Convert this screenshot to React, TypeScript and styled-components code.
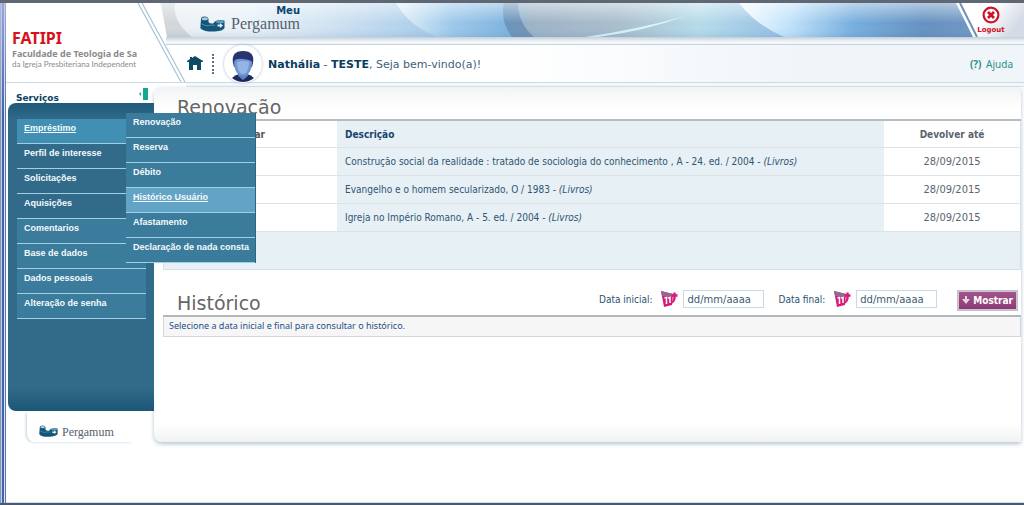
import React from "react";
import styled, { createGlobalStyle, css } from "styled-components";

const GlobalStyle = createGlobalStyle`
  *, *::before, *::after { box-sizing: border-box; }
  body { margin: 0; background: #fff; font-family: "DejaVu Sans Condensed", "DejaVu Sans", Tahoma, sans-serif; font-size: 10px; color: #2f5575; }
  a { color: inherit; text-decoration: none; }
  ul { list-style: none; margin: 0; padding: 0; }
  h1, h2, p { margin: 0; }
`;

const wide = `"DejaVu Sans", Verdana, sans-serif`;

const Frame = styled.div`
  display: flex;
  min-height: 100vh;
  border-top: 3px solid #5f6872;
  border-bottom: 2px solid #4a5a75;
`;
const Edge = styled.div`
  flex: none;
  width: 6px;
  background:
    linear-gradient(rgba(190, 196, 235, 0.7), rgba(190, 196, 235, 0) 110px),
    linear-gradient(90deg, #8a97b4 0 1px, #c3cdea 1px 2px, #3f66ac 2px 4px, #dfe6f5 4px 5px, #5e74a6 5px);
`;
const Page = styled.div`
  flex: 1;
  min-width: 0;
  border-bottom: 1px solid #d5dde4;
`;

const Header = styled.header`
  position: relative;
  display: flex;
  height: 80px;
  border-bottom: 1px solid #ccdae6;
`;
const Brand = styled.div`
  flex: none;
  width: 154px;
  padding: 26px 0 0 6px;
  white-space: nowrap;
`;
const BrandName = styled.h1`
  color: #d8101c;
  font-family: "Noto Sans", sans-serif;
  font-size: 16px;
  line-height: 19px;
`;
const BrandLine = styled.p<{ $strong?: boolean }>`
  font-family: ${(p) => (p.$strong ? `"Noto Sans"` : "Lato")}, sans-serif;
  font-size: ${(p) => (p.$strong ? "9px" : "8px")};
  font-weight: ${(p) => (p.$strong ? 700 : 400)};
  line-height: 11px;
  color: #8b8b8b;
`;
const Slashes = styled.svg`
  position: absolute;
  left: 130px;
  top: 0;
`;
const HeaderMain = styled.div`
  flex: 1;
  min-width: 0;
`;
const Banner = styled.div`
  position: relative;
  display: flex;
  justify-content: space-between;
  height: 34px;
`;
const Art = styled.svg`
  position: absolute;
  inset: 0;
  width: 100%;
  height: 100%;
`;
const BannerLogo = styled.div`
  position: relative;
  display: flex;
  align-items: flex-end;
  gap: 6px;
  padding: 0 0 5px 40px;
`;
const LogoWords = styled.div`
  display: flex;
  flex-direction: column;
  align-items: flex-end;
`;
const Meu = styled.span`
  font-family: ${wide};
  font-size: 10px;
  font-weight: 700;
  line-height: 10px;
  color: #0b4673;
`;
const Wordmark = styled.span<{ $small?: boolean }>`
  font-family: "Liberation Serif", serif;
  font-size: ${(p) => (p.$small ? "12px" : "16px")};
  line-height: 16px;
  color: #55606c;
`;
const Logout = styled.a`
  position: relative;
  display: flex;
  flex-direction: column;
  align-items: center;
  width: 68px;
  padding: 3px 0 0 2px;
  font-family: ${wide};
  font-size: 7px;
  font-weight: 700;
  line-height: 12px;
  color: #cf1126;
`;
const Raised = styled.span`
  position: relative;
  display: block;
  svg { display: block; }
`;
const BannerShade = styled.div`
  height: 8px;
  margin-left: 6px;
  border-bottom: 1px solid #c5d3de;
  background: linear-gradient(#c3cfdb, #f3f7fa 70%);
`;
const UserBar = styled.div`
  display: flex;
  align-items: center;
  height: 37px;
  padding: 1px 11px 0 27px;
  background: linear-gradient(90deg, #fff 40%, #f0f5f9 75%);
`;
const HomeLink = styled.a`
  display: block;
  padding-bottom: 2px;
  svg { display: block; }
`;
const Dots = styled.span`
  height: 20px;
  margin: 0 10px 0 9px;
  border-left: 2px dotted #5b6f93;
`;
const Avatar = styled.div`
  flex: none;
  position: relative;
  width: 38px;
  height: 38px;
  padding: 3px;
  border-radius: 50%;
  background: #fff;
  box-shadow: 0 0 3px #a9b9d2;
`;
const Welcome = styled.p`
  flex: 1;
  padding-left: 6px;
  font-family: ${wide};
  font-size: 11px;
  color: #44607a;
  b { color: #0c3c5e; }
`;
const Help = styled.a`
  font-family: "Noto Sans", sans-serif;
  font-size: 10px;
  color: #2b8f8b;
  b { margin-right: 2px; }
`;

const HeaderRule = styled.div`
  height: 4px;
  margin-left: 180px;
  border-bottom: 1px solid #d8e2ea;
  background: #f4f8fb;
`;
const Body = styled.div`
  display: flex;
  padding: 0 3px 0 2px;
`;
const Side = styled.aside`
  flex: none;
  width: 146px;
`;
const SideHead = styled.div`
  display: flex;
  justify-content: space-between;
  height: 16px;
  padding: 1px 6px 0 8px;
  color: #0b3f60;
`;
const SideTitle = styled.h2`
  padding-top: 4px;
  font-family: ${wide};
  font-size: 9px;
  line-height: 12px;
`;
const Menu = styled.nav`
  position: relative;
  z-index: 2;
  height: 308px;
  padding: 16px 8px 0 9px;
  border-radius: 8px 0 0 8px;
  background: linear-gradient(#1f5a7c, #326b8a 18px, #326b8a 284px, #1c5676);
  font-family: "Liberation Sans", Arial, sans-serif;
  font-size: 9px;
  font-weight: 700;
`;
const tones = {
  plain: "#326b8a",
  lower: "#3b7b9b",
  open: "#4190b4",
  hover: "#62a3c6",
};
const Item = styled.li<{ $tone: keyof typeof tones }>`
  ${(p) => p.$tone === "open" && css`position: relative;`}
`;
const ItemLink = styled.a<{ $tone: keyof typeof tones }>`
  display: block;
  height: 25px;
  padding: 3px 7px 0;
  border-bottom: 1px solid #9fd0e6;
  background: ${(p) => tones[p.$tone]};
  color: #f4fafd;
  line-height: 13px;
  white-space: nowrap;
  ${(p) => (p.$tone === "open" || p.$tone === "hover") && css`text-decoration: underline;`}
`;
const SubMenu = styled.ul`
  position: absolute;
  z-index: 3;
  left: 109px;
  top: -6px;
  width: 130px;
  border-right: 1px solid #2b6784;
`;
const SideFoot = styled.div`
  display: flex;
  align-items: center;
  gap: 4px;
  height: 31px;
  margin: 0 20px 0 19px;
  padding: 10px 0 0 12px;
  border-bottom-left-radius: 8px;
  box-shadow: -2px 1px 3px -1px #bfd3e0;
`;

const Panel = styled.main`
  flex: 1;
  min-width: 0;
  height: 355px;
  padding: 8px 0 0 9px;
  border-radius: 8px 0 0 8px;
  background: linear-gradient(#f2f3f4, #fff 22px, #fff 336px, #f1f2f3);
  box-shadow: 0 2px 4px #b3c4d2;
`;
const Title = styled.h2`
  padding-left: 14px;
  font-family: ${wide};
  font-size: 19px;
  font-weight: 400;
  line-height: 24px;
  color: #666;
`;
const Loans = styled.table`
  width: 100%;
  border-collapse: separate;
  border-spacing: 0;
  border-top: 2px solid #b9bcbe;
  table-layout: fixed;
  th, td {
    height: 28px;
    padding: 0 8px;
    border-bottom: 1px solid #dce3e7;
    text-align: left;
    vertical-align: middle;
  }
  th { height: 27px; color: #19456e; }
  th:first-child { padding: 0 72px 0 0; text-align: right; color: #555; }
  th:first-child, td:first-child { width: 174px; }
  th:nth-child(2), td:nth-child(2) { background: #e7f0f4; }
  th:last-child, td:last-child { width: 137px; text-align: center; color: #5a6570; border-right: 1px solid #dce3e7; }
  td:last-child { font-size: 11px; }
  tfoot td:first-child { height: 38px; background: #e7f0f4; border: 1px solid #d3e1e8; border-top: 0; }
`;
const HistoryHead = styled.form`
  display: flex;
  align-items: flex-end;
  height: 34px;
  margin-top: 11px;
  color: #2b5273;
`;
const Grow = styled.div`
  flex: 1;
`;
const Field = styled.label`
  display: flex;
  align-items: center;
  gap: 5px;
  height: 32px;
  margin-right: 14px;
  span { margin-right: 4px; }
`;
const DateInput = styled.input`
  width: 81px;
  height: 18px;
  padding: 0 3px;
  border: 1px solid #c6dbe8;
  background: #fff;
  font-family: ${wide};
  font-size: 10px;
  color: #3b5a72;
`;
const Show = styled.button`
  display: flex;
  align-items: center;
  gap: 3px;
  height: 21px;
  margin: 0 3px 4px 6px;
  padding: 0 3px;
  border: 2px solid #d9bfd1;
  outline: 1px solid #b9c4cc;
  outline-offset: -1px;
  background: linear-gradient(#a3568b, #8d3a74);
  font-family: inherit;
  font-size: 10px;
  font-weight: 700;
  color: #fff;
`;
const Notice = styled.p`
  height: 22px;
  padding: 0 5px;
  border: 1px solid #d3d6d9;
  border-top: 2px solid #b4b7ba;
  background: #f6f6f6;
  font-family: "Noto Sans", sans-serif;
  font-size: 9px;
  line-height: 18px;
  color: #254f8a;
`;

function PergamumMark({ width }: { width: number }) {
  return (
    <svg width={width} height={(width * 16) / 25} viewBox="0 0 25 16" aria-hidden="true">
      <path d="M1 3Q1 .5 4.500 .5T8.500 3V6Q10 8 13 7.500L15 5.500Q17 3.500 24.500 4.500V12Q23 15 15 15.500Q5 16 1 13Q0 12 .5 10Z" fill="#14557a" />
      <ellipse cx="4.800" cy="2.800" rx="3" ry="1.500" fill="#a9cbdc" />
      <path d="M2 8Q6 10.500 9 9.500T15 9.500" fill="none" stroke="#4f8fb0" strokeWidth="1" />
      <ellipse cx="20" cy="6" rx="4" ry="1.300" fill="#5f9dbc" />
      <path d="M17.500 8.500H20V7L23 9.500L20 12V10.500H17.500Z" fill="#e2f0f6" />
    </svg>
  );
}

function CalendarIcon() {
  return (
    <svg width="17" height="18" viewBox="0 0 17 18" aria-hidden="true">
      <path d="M0 1L12 4L11 15L3 17Z" fill="#d81b78" />
      <path d="M0 1L12 4V7L1 6Z" fill="#8f6a92" />
      <path d="M3.500 8L5.500 7.500V14M7 8L9 7.500V13" fill="none" stroke="#fff" strokeWidth="1.500" />
      <path d="M13.500 2.500V8.500M10.500 5.500H16.500" stroke="#d81b78" strokeWidth="2.400" />
      <path d="M10 14L12.500 8H14.500Q14.500 12 10 14Z" fill="#d81b78" />
    </svg>
  );
}

const services = [
  "Empréstimo", "Perfil de interesse", "Solicitações", "Aquisições",
  "Comentarios", "Base de dados", "Dados pessoais", "Alteração de senha",
];
const loanActions = ["Renovação", "Reserva", "Débito", "Histórico Usuário", "Afastamento", "Declaração de nada consta"];
const loans = [
  "Construção social da realidade : tratado de sociologia do conhecimento , A - 24. ed. / 2004",
  "Evangelho e o homem secularizado, O / 1983",
  "Igreja no Império Romano, A - 5. ed. / 2004",
];

function LoanSubMenu() {
  return (
    <SubMenu>
      {loanActions.map((action) => {
        const tone = action === "Histórico Usuário" ? "hover" : "lower";
        return (
          <Item key={action} $tone={tone}>
            <ItemLink href="#acao" $tone={tone}>{action}</ItemLink>
          </Item>
        );
      })}
    </SubMenu>
  );
}

export default function App() {
  return (
    <>
      <GlobalStyle />
      <Frame>
        <Edge />
        <Page>
          <Header>
            <Brand>
              <BrandName>FATIPI</BrandName>
              <BrandLine $strong>Faculdade de Teologia de Sa</BrandLine>
              <BrandLine>da Igreja Presbiteriana Independent</BrandLine>
            </Brand>
            <HeaderMain>
              <Banner>
                <Art viewBox="0 0 864 34" preserveAspectRatio="none" aria-hidden="true">
                  <defs>
                    <linearGradient id="base" x1="0" x2="1" y1="0" y2="0">
                      <stop offset="0" stopColor="#eef1f4" />
                      <stop offset=".1" stopColor="#eaf2f8" />
                      <stop offset=".2" stopColor="#cfe2f2" />
                      <stop offset=".33" stopColor="#a3c9e8" />
                    </linearGradient>
                    <linearGradient id="mid" x1="0" x2="1" y1="0" y2="0">
                      <stop offset="0" stopColor="#e4f1fa" />
                      <stop offset=".14" stopColor="#9cc8ea" />
                      <stop offset=".27" stopColor="#7fb4e0" />
                      <stop offset=".33" stopColor="#9cb2c6" />
                      <stop offset=".55" stopColor="#a9bdcb" />
                      <stop offset=".75" stopColor="#b5dcea" />
                      <stop offset="1" stopColor="#8fb9e2" />
                    </linearGradient>
                    <linearGradient id="end" x1="0" x2="1" y1="0" y2="0">
                      <stop offset="0" stopColor="#f4fbff" />
                      <stop offset=".18" stopColor="#bfe2fa" />
                      <stop offset=".4" stopColor="#76aedd" />
                      <stop offset=".65" stopColor="#6490c0" />
                      <stop offset="1" stopColor="#7a9bc4" />
                    </linearGradient>
                    <linearGradient id="sheen" x1="0" x2="0" y1="0" y2="1">
                      <stop offset="0" stopColor="#fff" stopOpacity=".5" />
                      <stop offset=".6" stopColor="#fff" stopOpacity="0" />
                      <stop offset="1" stopColor="#3f6f9f" stopOpacity=".12" />
                    </linearGradient>
                  </defs>
                  <path d="M0 0H864V34H7Z" fill="url(#base)" />
                  <path d="M1 0H15Q12 18 32 34H7Z" fill="#d3d7da" />
                  <path d="M236 0H640V34H277Q248 22 236 0Z" fill="url(#mid)" />
                  <path d="M344 0H358Q358 20 374 34H352Q340 18 344 0Z" fill="#5f86ad" fillOpacity=".7" />
                  <path d="M425 34Q480 26 525 13Q485 28 438 34Z" fill="#d8f6fb" />
                  <path d="M579 0H864V34H624Q596 22 579 0Z" fill="url(#end)" />
                  <path d="M0 0H864V34H7Z" fill="url(#sheen)" />
                </Art>
                <BannerLogo>
                  <PergamumMark width={25} />
                  <LogoWords>
                    <Meu>Meu</Meu>
                    <Wordmark>Pergamum</Wordmark>
                  </LogoWords>
                </BannerLogo>
                <Logout href="#sair">
                  <Art viewBox="0 0 68 34" preserveAspectRatio="none" aria-hidden="true">
                    <defs>
                      <linearGradient id="corner" x1="0" x2="1" y1="0" y2=".4">
                        <stop offset=".5" stopColor="#fff" />
                        <stop offset="1" stopColor="#d5dbe6" />
                      </linearGradient>
                    </defs>
                    <path d="M0 0H68V34H17Z" fill="url(#corner)" />
                    <path d="M4 0L21 34" stroke="#6f90b8" strokeWidth="2" />
                  </Art>
                  <Raised>
                    <svg width="18" height="18" viewBox="0 0 18 18" aria-hidden="true">
                      <circle cx="9" cy="9" r="7.400" fill="#fff" stroke="#cf1126" strokeWidth="2.200" />
                      <path d="M6 6l6 6M12 6l-6 6" stroke="#cf1126" strokeWidth="2.800" />
                    </svg>
                  </Raised>
                  <Raised>Logout</Raised>
                </Logout>
              </Banner>
              <BannerShade />
              <UserBar>
                <HomeLink href="#inicio" aria-label="Início">
                  <svg width="16" height="14" viewBox="0 0 16 14" aria-hidden="true">
                    <path d="M8 0L16 5V6H14V14H10V9H6V14H2V6H0V5L3 3V1H5V2Z" fill="#0d4a63" />
                  </svg>
                </HomeLink>
                <Dots />
                <Avatar>
                  <svg width="32" height="34" viewBox="0 0 32 34" aria-hidden="true">
                    <path d="M5 30Q8 27 12 26H20Q24 27 27 30Q22 34 16 34T5 30Z" fill="#1d2b5c" />
                    <path d="M12 24H20L21 28L16 32L11 28Z" fill="#5f82c2" />
                    <path d="M6 15Q4 3 16 3T26 15L25 19H7Z" fill="#27346f" />
                    <path d="M7 14Q8 10 16 11T25 14Q25 22 21 26Q16 30 11 26Q7 22 7 14Z" fill="#6f95d2" />
                    <path d="M10 14Q16 12 22 14Q22 21 19 25Q16 27 13 25Q10 21 10 14Z" fill="#94b5e4" />
                  </svg>
                </Avatar>
                <Welcome><b>Nathália</b> - <b>TESTE</b>, Seja bem-vindo(a)!</Welcome>
                <Help href="#ajuda"><b>(?)</b> Ajuda</Help>
              </UserBar>
            </HeaderMain>
            <Slashes width="50" height="80" viewBox="0 0 50 80" aria-hidden="true">
              <path d="M2 0L45 79M6 0L49 79" fill="none" stroke="#a9c3d3" strokeWidth="1.200" />
            </Slashes>
          </Header>
          <HeaderRule />

          <Body>
            <Side>
              <SideHead>
                <SideTitle>Serviços</SideTitle>
                <svg width="9" height="12" viewBox="0 0 9 12" aria-hidden="true">
                  <path d="M4 0H9V12H4Z" fill="#14a88c" />
                  <path d="M0 6L2 4V8Z" fill="#14a88c" />
                </svg>
              </SideHead>
              <Menu aria-label="Serviços">
                <ul>
                  {services.map((name, i) => {
                    const tone = i === 0 ? "open" : i < 4 ? "plain" : "lower";
                    return (
                      <Item key={name} $tone={tone}>
                        <ItemLink href="#servico" $tone={tone}>{name}</ItemLink>
                        {i === 0 && <LoanSubMenu />}
                      </Item>
                    );
                  })}
                </ul>
              </Menu>
              <SideFoot>
                <PergamumMark width={19} />
                <Wordmark $small>Pergamum</Wordmark>
              </SideFoot>
            </Side>

            <Panel>
              <Title>Renovação</Title>
              <Loans>
                <thead>
                  <tr><th>Renovar</th><th>Descrição</th><th>Devolver até</th></tr>
                </thead>
                <tbody>
                  {loans.map((loan) => (
                    <tr key={loan}>
                      <td />
                      <td>{loan} - <i>(Livros)</i></td>
                      <td>28/09/2015</td>
                    </tr>
                  ))}
                </tbody>
                <tfoot>
                  <tr><td colSpan={3} /></tr>
                </tfoot>
              </Loans>
              <HistoryHead>
                <Grow><Title>Histórico</Title></Grow>
                <Field>
                  <span>Data inicial:</span>
                  <CalendarIcon />
                  <DateInput defaultValue="dd/mm/aaaa" />
                </Field>
                <Field>
                  <span>Data final:</span>
                  <CalendarIcon />
                  <DateInput defaultValue="dd/mm/aaaa" />
                </Field>
                <Show type="button">
                  <svg width="8" height="9" viewBox="0 0 8 9" aria-hidden="true">
                    <path d="M3 0H5V3H8L4 8L0 3H3Z" fill="#ecd3e3" />
                  </svg>
                  Mostrar
                </Show>
              </HistoryHead>
              <Notice>Selecione a data inicial e final para consultar o histórico.</Notice>
            </Panel>
          </Body>
        </Page>
      </Frame>
    </>
  );
}
